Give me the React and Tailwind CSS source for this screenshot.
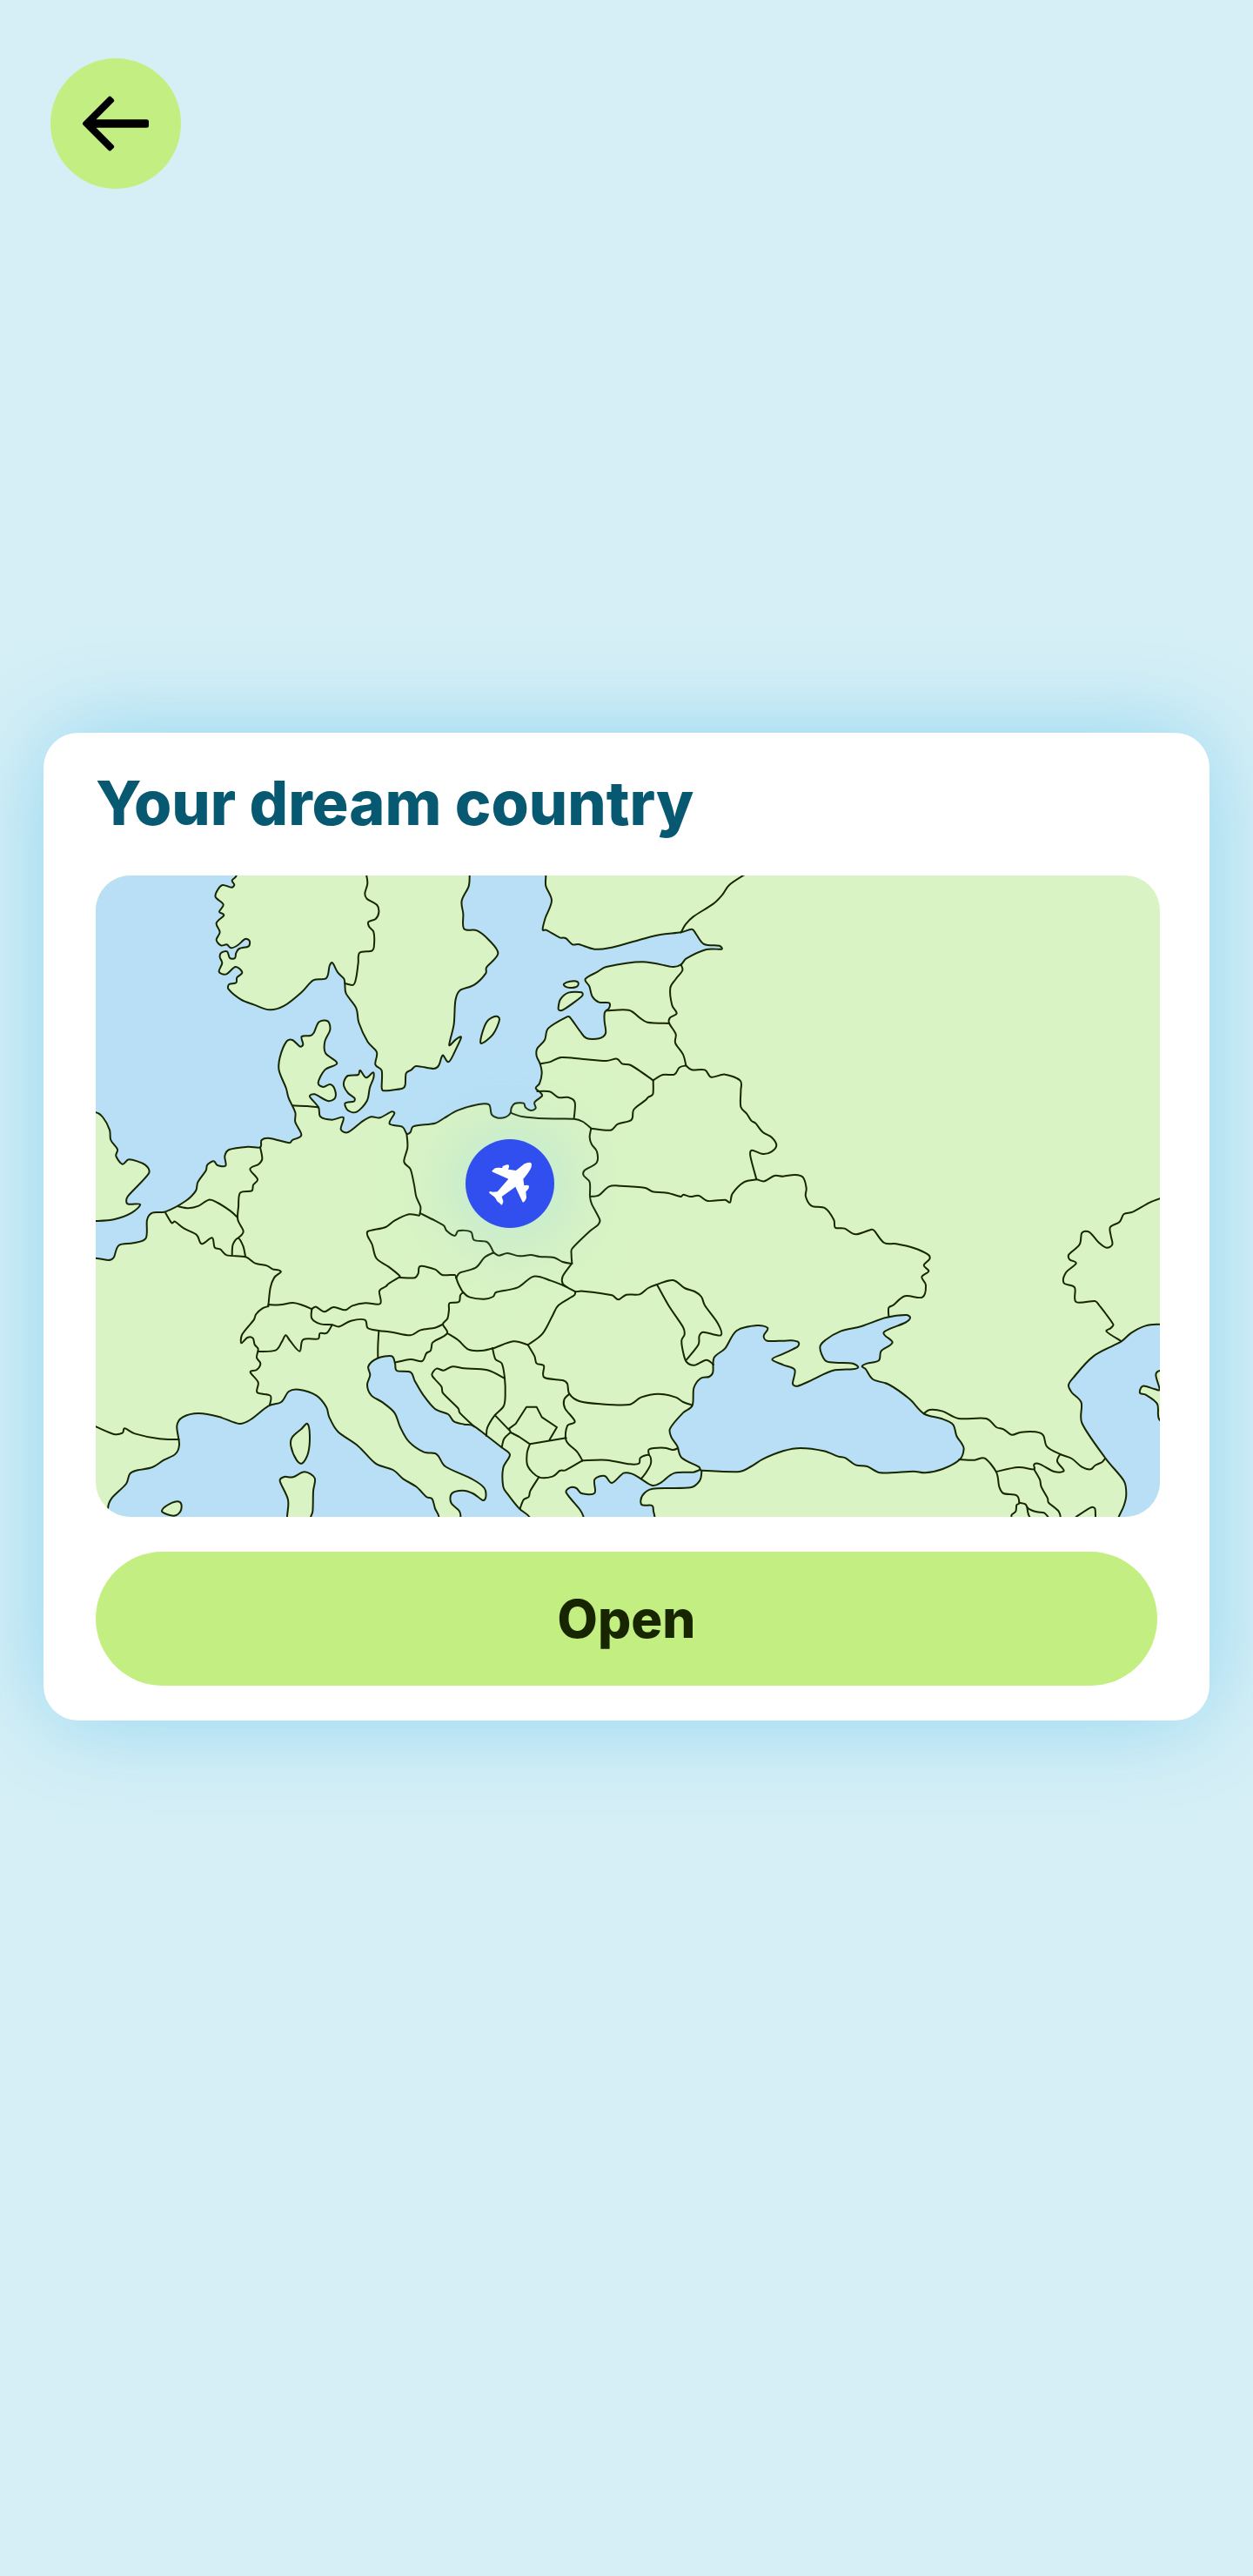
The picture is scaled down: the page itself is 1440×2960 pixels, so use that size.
import React from "react";

/* Turns "x,y x,y ..." into a smooth Catmull-Rom path. */
function curve(points, closed = false) {
  const p = points.trim().split(/\s+/).map((s) => s.split(",").map(Number));
  const n = p.length;
  const at = (i) => (closed ? p[(i + n) % n] : p[Math.max(0, Math.min(n - 1, i))]);
  let d = `M${p[0][0]} ${p[0][1]}`;
  const last = closed ? n : n - 1;
  for (let i = 0; i < last; i++) {
    const [a, b, c, e] = [at(i - 1), at(i), at(i + 1), at(i + 2)];
    const k = Math.hypot(c[0] - b[0], c[1] - b[1]);
    const t1 = Math.min(1 / 6, (0.36 * k) / (Math.hypot(c[0] - a[0], c[1] - a[1]) || 1));
    const t2 = Math.min(1 / 6, (0.36 * k) / (Math.hypot(e[0] - b[0], e[1] - b[1]) || 1));
    d += `C${b[0] + (c[0] - a[0]) * t1} ${b[1] + (c[1] - a[1]) * t1} ${c[0] - (e[0] - b[0]) * t2} ${c[1] - (e[1] - b[1]) * t2} ${c[0]} ${c[1]}`;
  }
  return closed ? d + "Z" : d;
}

const seas = [
  // North Sea and Baltic
  `-60,-60 515,-60 515,18 500,35 508,50 498,59 468,51 452,65 443,92 470,118 456,143 472,155 446,182 458,213 446,240 462,259 482,256 497,268 520,258 545,237 560,243 557,262 525,270 514,285 510,303 492,302 483,280 462,285 458,300 466,320 455,350 480,358 512,333 535,352 517,370 514,388 490,393 488,410 530,445 575,463 630,481 680,467 740,420 780,379 825,372 836,330 846,319 865,353 886,374 889,392 893,425 928,475 937,525 968,592 999,627 994,670 1016,690 1016,749 1022,760 1087,752 1097,740 1100,700 1118,688 1135,675 1195,684 1212,674 1222,645 1228,638 1248,660 1275,610 1290,575 1272,583 1250,604 1252,585 1265,530 1270,450 1285,415 1335,395 1375,355 1377,335 1417,287 1385,240 1345,208 1300,202 1297,150 1292,105 1316,55 1319,18 1319,-60 1582,-60 1582,18 1582,55 1602,105 1580,165 1571,205 1583,206 1630,232 1650,234 1674,256 1695,255 1750,272 1800,268 1880,247 1965,224 2048,214 2085,203 2100,220 2128,255 2180,260 2188,272 2135,273 2065,305 2048,325 2020,333 1915,316 1790,333 1760,350 1718,375 1732,400 1742,435 1765,455 1800,457 1800,475 1785,490 1784,520 1788,562 1765,580 1722,579 1700,555 1665,507 1655,505 1590,545 1578,585 1552,615 1550,640 1562,667 1568,700 1560,735 1547,751 1562,765 1569,778 1543,800 1547,820 1530,828 1512,818 1505,803 1475,804 1463,820 1460,837 1445,850 1418,854 1395,842 1386,808 1350,807 1280,827 1230,855 1200,872 1125,883 1115,903 1102,908 1088,885 1043,874 1060,838 1050,832 1010,853 980,850 950,865 900,903 875,893 884,852 845,860 805,850 798,817 768,780 785,772 830,795 855,785 854,755 838,738 815,747 797,733 820,688 862,665 822,630 820,590 838,550 830,520 800,523 782,560 770,570 740,573 745,600 735,608 708,585 688,590 665,645 662,690 686,750 695,785 718,835 718,868 739,913 708,930 698,940 630,924 602,930 597,955 555,953 490,963 475,985 478,1018 450,1017 437,1003 415,1015 410,1035 382,1075 375,1105 340,1140 270,1177 225,1181 207,1205 203,1268 160,1285 110,1293 92,1335 75,1344 30,1337 -60,1337`,
  // Western Mediterranean
  `75,2300 72,2200 85,2165 135,2115 148,2080 175,2068 225,2058 265,2033 305,2012 318,1980 310,1915 330,1885 385,1872 455,1884 525,1908 565,1893 625,1847 670,1833 695,1797 730,1790 790,1810 825,1850 835,1885 865,1935 935,1985 995,2045 1055,2067 1090,2098 1135,2125 1170,2160 1190,2167 1200,2200 1213,2229 1213,2300`,
  // Adriatic
  `1288,2300 1288,2225 1283,2208 1255,2180 1258,2148 1295,2138 1330,2148 1365,2172 1375,2160 1370,2130 1330,2100 1235,2055 1212,2020 1200,2010 1160,2005 1110,1970 1080,1920 1060,1870 1020,1835 980,1810 966,1775 976,1740 970,1710 1000,1683 1050,1675 1062,1700 1068,1725 1115,1730 1130,1760 1160,1810 1200,1857 1245,1875 1265,1900 1300,1910 1332,1915 1375,1947 1430,1990 1458,2015 1435,2060 1435,2125 1450,2150 1490,2200 1525,2229 1560,2300`,
  // Aegean and Marmara
  `1730,2300 1712,2229 1700,2205 1652,2145 1665,2128 1687,2130 1705,2148 1750,2147 1750,2100 1785,2088 1810,2112 1850,2078 1880,2081 1910,2098 1950,2121 1980,2110 2025,2078 2090,2075 2114,2067 2119,2072 2112,2105 2080,2128 1950,2132 1915,2155 1912,2187 1948,2190 1953,2210 1957,2229 1957,2300`,
  // Black Sea and Azov
  `2120,2069 2250,2073 2290,2055 2330,2030 2400,2002 2460,1992 2540,2002 2590,2021 2615,2026 2650,2050 2690,2055 2735,2077 2850,2072 2890,2077 2950,2064 3010,2030 3023,1995 3015,1975 2998,1950 2985,1910 2945,1890 2885,1873 2835,1822 2765,1773 2710,1755 2685,1720 2672,1710 2690,1700 2730,1690 2738,1657 2777,1628 2747,1593 2820,1560 2838,1543 2825,1533 2755,1542 2670,1572 2600,1588 2545,1620 2527,1645 2545,1690 2580,1697 2640,1700 2659,1713 2640,1720 2570,1725 2500,1757 2450,1778 2433,1770 2440,1722 2400,1705 2362,1686 2400,1667 2450,1642 2453,1627 2430,1621 2400,1622 2345,1622 2333,1605 2347,1578 2310,1569 2240,1587 2200,1648 2162,1680 2158,1730 2145,1746 2115,1752 2092,1785 2087,1845 2055,1870 2010,1925 2015,1955 2035,1985 2050,2025 2110,2057 2115,2067`,
  // Caspian
  `3760,1565 3700,1565 3650,1570 3600,1595 3565,1625 3470,1675 3400,1750 3384,1775 3395,1800 3428,1835 3430,1905 3510,2025 3575,2105 3583,2150 3575,2190 3553,2240 3540,2300 3760,2300`,
];

const islands = [
  // Great Britain
  `-60,835 30,835 55,852 78,895 82,930 105,962 100,985 122,1013 145,997 200,1015 213,1045 140,1125 140,1150 183,1152 155,1180 95,1203 30,1209 -60,1209`,
  // Zealand
  `886,745 887,725 900,708 935,705 942,690 962,715 986,697 988,715 975,749 965,795 930,833 900,828 890,803 920,797 922,785 900,768`,
  // Gotland, Hiiumaa, Saaremaa
  `1360,597 1360,570 1380,520 1410,503 1422,515 1400,565`,
  `1644,392 1665,383 1692,385 1690,400 1665,405 1648,400`,
  `1625,475 1632,445 1660,422 1705,421 1708,432 1680,455 1640,482 1627,482`,
  // Corsica, Sardinia, Mallorca
  `760,1908 768,1950 762,2010 742,2044 722,2032 703,1985 707,1955 740,1925`,
  `690,2300 690,2229 693,2170 665,2105 680,2091 710,2092 750,2074 785,2095 780,2140 778,2210 770,2235 770,2300`,
  `258,2208 275,2190 310,2176 325,2185 322,2210 300,2225 268,2217`,
  // Eastern shore of the Caspian
  `3760,1725 3700,1725 3685,1740 3698,1790 3680,1788 3640,1778 3630,1802 3650,1808 3690,1840 3698,1895 3760,1920`,
];

const borders = [
  // Scandinavia and the Baltic states
  `962,10 967,45 958,80 965,98 1000,120 1006,145 995,168 970,178 973,195 988,212 990,255 983,277 940,284 935,320 928,370 918,395 889,390`,
  `2275,10 2215,50 2190,85 2160,115 2090,160 2065,185 2048,214`,
  `2048,325 2053,345 2030,375 2011,405 2017,465 2033,493 2010,508 2007,527 2030,565 2028,595 2055,635 2065,673`,
  `1792,484 1868,482 1905,508 1932,524 2007,528`,
  `1562,667 1595,661 1635,645 1710,651 1790,657 1827,650 1845,667 1875,672 1952,724`,
  `1952,724 1985,705 2025,704 2042,680 2065,673`,
  `2065,673 2085,688 2130,688 2152,713 2200,704 2252,725 2254,760 2254,815 2275,840 2290,863 2305,872 2330,903 2360,920 2377,948 2360,970 2330,978 2292,965 2287,985 2308,1065`,
  `1952,724 1951,772 1935,782 1925,793 1885,825 1877,860 1830,875 1805,896 1738,890`,
  `1552,762 1595,763 1625,783 1660,783 1682,800 1679,855`,
  `1460,836 1500,849 1580,856 1679,857 1710,867 1738,890`,
  // Poland, Belarus, Ukraine
  `1738,890 1733,920 1740,945 1758,970 1757,1008 1715,1035 1712,1052 1733,1075 1734,1125 1740,1150 1768,1205 1762,1222 1735,1243 1672,1305 1670,1325 1672,1355`,
  `1734,1125 1765,1120 1800,1090 1840,1088 1925,1095 1950,1108 2000,1112 2048,1125 2056,1118 2080,1125 2110,1122 2140,1140 2200,1136 2217,1145 2225,1115 2265,1075 2308,1066`,
  `2308,1065 2335,1072 2370,1053 2400,1055 2440,1050 2468,1058 2480,1095 2478,1125 2498,1157 2545,1165 2575,1205 2580,1232 2612,1235 2650,1255 2705,1238 2715,1243 2748,1284 2790,1288 2850,1302 2900,1325 2905,1340 2885,1362 2902,1382 2878,1402 2892,1430 2880,1472 2820,1468 2780,1499 2764,1508 2764,1537`,
  // Germany, Czechia, Slovakia, Austria
  `1102,908 1105,955 1093,1005 1115,1030 1128,1085 1135,1125 1150,1160 1148,1182`,
  `1148,1182 1145,1190 1110,1186 1060,1208 1030,1230 968,1245 968,1262 983,1290 998,1338 1040,1367 1078,1398 1078,1404`,
  `1150,1183 1200,1208 1230,1225 1240,1243 1268,1260 1280,1243 1323,1246 1335,1275 1380,1282 1402,1318`,
  `1402,1318 1420,1328 1450,1320 1490,1330 1530,1326 1560,1332 1610,1335 1640,1350 1672,1356`,
  `1402,1318 1370,1335 1340,1370 1285,1388 1273,1405`,
  `1080,1404 1130,1405 1142,1390 1149,1365 1200,1376 1225,1395 1268,1395 1273,1405`,
  `1078,1402 1040,1425 1030,1435 1008,1450 1011,1494 960,1492 915,1501 890,1516 850,1506 818,1522 790,1505 775,1512`,
  `1273,1405 1280,1425 1297,1455 1320,1472 1370,1478 1400,1470 1410,1455 1485,1438 1540,1400 1600,1415 1650,1435 1684,1453`,
  `1672,1355 1640,1400 1640,1425 1655,1437`,
  // Hungary, Romania, Moldova
  `1684,1453 1680,1465 1625,1500 1605,1535 1570,1598 1520,1636`,
  `1684,1453 1710,1451 1810,1465 1832,1480 1860,1463 1905,1462 1935,1440 1965,1428 2020,1413 2060,1440 2095,1452 2118,1470 2130,1500 2175,1562 2185,1603 2125,1592 2111,1605 2108,1635 2067,1687`,
  `1965,1428 2005,1500 2055,1575 2060,1600 2050,1620 2055,1660 2067,1695 2095,1706 2135,1688 2160,1704`,
  `1297,1455 1287,1465 1282,1488 1250,1492 1248,1515 1243,1545 1227,1565 1242,1596 1200,1622 1190,1630 1185,1655 1170,1665 1155,1692 1115,1686 1062,1697`,
  `775,1512 775,1545 805,1564 845,1567 870,1573 910,1553 958,1550 968,1578 1005,1587 1050,1592 1115,1603 1150,1585 1200,1577 1227,1565`,
  `1006,1588 1003,1640 1003,1680`,
  `1242,1596 1280,1620 1315,1652 1360,1656 1400,1648 1470,1624 1520,1636`,
  // France, Benelux, Switzerland
  `625,1497 665,1498 710,1491 745,1500 775,1513`,
  `625,1503 605,1510 583,1530 575,1550 535,1600 532,1630 553,1611 572,1613 578,1635 590,1650 585,1680 598,1700 585,1722 563,1730 590,1765 587,1800 632,1811 630,1843`,
  `625,1503 632,1440 645,1405 668,1385 660,1378 640,1375 620,1363 580,1355 547,1333 482,1327 460,1307 440,1300 431,1267 395,1288 378,1257 335,1235 303,1211 292,1216 270,1180`,
  `500,1326 503,1290 521,1268 538,1295 546,1331`,
  `315,1159 350,1165 385,1157 420,1136 450,1146 495,1175 519,1197`,
  `597,955 604,995 592,1013 562,1030 588,1065 573,1085 568,1105 528,1112 522,1160 520,1205 539,1245 521,1268`,
  `708,811 760,813 797,817`,
  `590,1659 650,1655 672,1625 685,1603 700,1622 733,1658 745,1618 797,1615 803,1596 827,1595 845,1567`,
  `20,1913 90,1943 122,1940 130,1924 165,1942 250,1960 317,1962`,
  // Balkans
  `1520,1636 1543,1675 1550,1700 1575,1708 1576,1748 1640,1758 1656,1770 1663,1805 1697,1830 1770,1840 1870,1842 1910,1817 1970,1805 2030,1817 2055,1833 2085,1843`,
  `1663,1805 1645,1825 1648,1855 1682,1900 1656,1915 1652,1966 1690,2005 1708,2035`,
  `1708,2035 1790,2033 1870,2047 1903,2045 1908,2025 1938,2016 1944,2045 1925,2080 1910,2098`,
  `1938,2016 1938,1996 1990,1991 2020,1998 2038,1992`,
  `1708,2035 1650,2068 1630,2070 1605,2090 1558,2092 1520,2055 1517,2010 1527,1978`,
  `1460,1938 1438,1960 1430,1990`,
  `1558,2092 1528,2140 1523,2160 1505,2170 1493,2200`,
  `1398,1647 1408,1685 1430,1700 1440,1750 1442,1810 1436,1848 1405,1880 1380,1922 1377,1950`,
  `1440,1752 1380,1723 1300,1717 1260,1711 1230,1724 1205,1718 1189,1738 1200,1755 1222,1780 1227,1802 1280,1855 1285,1870 1335,1918`,
  // Caucasus
  `2885,1873 2905,1860 2950,1865 3005,1890 3100,1890 3135,1920 3160,1927 3188,1946 3220,1937 3270,1936 3297,1948 3310,1987 3355,2013 3395,2028 3430,2057 3460,2065 3475,2052 3500,2040 3510,2028`,
  `3007,2031 3060,2033 3095,2027 3135,2075 3145,2125 3160,2148 3205,2155 3214,2182 3205,2188 3202,2210 3188,2222 3188,2240`,
  `3214,2180 3235,2185 3245,2200 3275,2212 3300,2215 3318,2235`,
  `3241,2195 3245,2218 3255,2240`,
  `3135,2073 3210,2058 3265,2065 3265,2048 3285,2047 3335,2073 3368,2070 3345,2038 3355,2013`,
  `3265,2065 3285,2100 3290,2125 3312,2165 3315,2180 3350,2210 3358,2240`,
  `3395,2240 3410,2229 3460,2197 3475,2200 3477,2240`,
  // Kazakhstan
  `3710,1128 3665,1145 3605,1178 3575,1185 3560,1212 3528,1230 3530,1260 3535,1290 3515,1301 3490,1285 3455,1247 3430,1250 3422,1290 3385,1325 3388,1342 3410,1355 3375,1387 3368,1423 3405,1438 3410,1488 3475,1485 3490,1500 3538,1565 3530,1578 3515,1590 3565,1623`,
];

const straightBorders = `M1594 1964L1620 1920L1568 1885L1550 1850H1515L1478 1908L1455 1925L1461 1938L1490 1953L1527 1978L1652 1957M1407 1879L1456 1930`;

function EuropeMap() {
  return (
    <svg
      viewBox="30 18 3669 2211"
      role="img"
      aria-label="Map of Europe"
      className="block h-auto w-full bg-[#d9f3c4]"
    >
      <g stroke="#172600" strokeWidth="6" strokeLinejoin="round" strokeLinecap="round">
        <g fill="#b8dff6">
          {seas.map((s) => (
            <path key={s.slice(0, 24)} d={curve(s, true)} />
          ))}
        </g>
        <g fill="#d9f3c4">
          {islands.map((s) => (
            <path key={s.slice(0, 24)} d={curve(s, true)} />
          ))}
        </g>
        <g fill="none">
          {borders.map((s) => (
            <path key={s.slice(0, 30)} d={curve(s)} />
          ))}
          <path d={straightBorders} />
        </g>
      </g>
    </svg>
  );
}

function BackArrow() {
  return (
    <svg viewBox="0 0 78 66" className="h-[66px] w-[78px]" aria-hidden="true">
      <path
        d="M3.5 33L32.2 4.2L34.6 6.6L10.5 30.7H74.5V35.3H10.5L34.6 59.4L32.2 61.8Z"
        stroke="black"
        strokeWidth="5"
        strokeLinejoin="round"
      />
    </svg>
  );
}

function PlaneIcon() {
  return (
    <svg viewBox="105 177 306 306" className="size-full" aria-hidden="true">
      <path
        fill="white"
        d="M308 262Q320 256 330 258Q335 262 332 272C328 285 314 302 304 314L307 337Q316 333 323 337Q327 346 313 358L315 377Q315 383 306 394Q303 396 301 392L277 341L230 375L235 391Q235 398 231 403Q227 405 225 400L213 390C210 378 200 373 191 366Q184 361 188 358Q192 356 198 359L215 358L253 314L199 290Q193 287 198 284L207 277Q211 274 232 276Q232 268 240 268Q250 262 255 267Q257 274 252 281L279 285Z"
      />
    </svg>
  );
}

export default function App() {
  return (
    <main className="flex min-h-screen flex-col bg-[#d6eff6] px-[50px] pt-[67px] pb-16 font-[Inter,'Liberation_Sans',sans-serif]">
      <header className="pl-2">
        <button
          type="button"
          aria-label="Back"
          className="flex size-[150px] items-center justify-center rounded-full bg-[#c3ef82]"
        >
          <BackArrow />
        </button>
      </header>

      <section
        aria-labelledby="dream-title"
        className="mt-[625px] flex flex-col gap-10 rounded-[40px] bg-white pt-[38px] pr-[57px] pb-10 pl-[60px] shadow-[0_0_110px_#90d5f0]"
      >
        <h1 id="dream-title" className="text-[70px] leading-[86px] font-extrabold text-[#075871]">
          Your dream country
        </h1>

        <div className="relative overflow-hidden rounded-[40px]">
          <EuropeMap />
          <button
            type="button"
            aria-label="Poland"
            className="absolute top-[48%] left-[38.9%] size-[102px] -translate-1/2 rounded-full bg-[#304fee] shadow-[0_0_90px_#90d5f099]"
          >
            <PlaneIcon />
          </button>
        </div>

        <button
          type="button"
          className="mr-[3px] h-[154px] rounded-full bg-[#c3ef82] text-[60px] leading-[72px] font-extrabold text-[#172600]"
        >
          Open
        </button>
      </section>
    </main>
  );
}
